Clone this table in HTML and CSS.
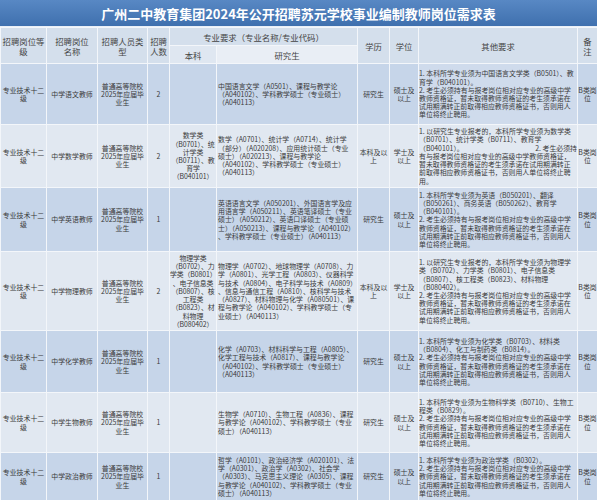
FILE: index.html
```html
<!DOCTYPE html>
<html lang="zh-CN">
<head>
<meta charset="utf-8">
<title>岗位需求表</title>
<link rel="stylesheet" href="styles.css">
</head>
<body>
<div class="title">广州二中教育集团2024年公开招聘苏元学校事业编制教师岗位需求表</div>
<table>
  <colgroup>
    <col class="c1"><col class="c2"><col class="c3"><col class="c4"><col class="c5">
    <col class="c6"><col class="c7"><col class="c8"><col class="c9"><col class="c10">
  </colgroup>
  <thead>
    <tr class="h1">
      <th rowspan="2">招聘岗位等<br>级</th>
      <th rowspan="2">招聘岗位<br>名称</th>
      <th rowspan="2">招聘人员类<br>型</th>
      <th rowspan="2">招聘<br>人数</th>
      <th colspan="2">专业要求（专业名称/专业代码）</th>
      <th rowspan="2">学历</th>
      <th rowspan="2">学位</th>
      <th rowspan="2">其他要求</th>
      <th rowspan="2">备<br>注</th>
    </tr>
    <tr class="h2">
      <th class="s1">本科</th>
      <th class="s2">研究生</th>
    </tr>
  </thead>
  <tbody>
    <tr class="odd">
      <td>专业技术十二<br>级</td>
      <td>中学语文教师</td>
      <td>普通高等院校<br>2025年应届毕<br>业生</td>
      <td>2</td>
      <td class="bk"></td>
      <td class="l">中国语言文学（A0501）、课程与教学论<br>（A040102）、学科教学硕士（专业硕士）<br>（A040113）</td>
      <td>研究生</td>
      <td>硕士及<br>以上</td>
      <td class="l o">1. 本科所学专业须为中国语言文学类（B0501）、教<br>育学（B040101）。<br>2. 考生必须持有与报考岗位相对应专业的高级中学<br>教师资格证，暂未取得教师资格证的考生须承诺在<br>试用期满转正前取得相应教师资格证书，否则用人<br>单位将终止聘用。</td>
      <td>B类岗<br>位</td>
    </tr>
    <tr class="even">
      <td>专业技术十二<br>级</td>
      <td>中学数学教师</td>
      <td>普通高等院校<br>2025年应届毕<br>业生</td>
      <td>2</td>
      <td class="bk">数学类<br>（B0701）、统<br>计学类<br>（B0711）、教<br>育学<br>（B040101）</td>
      <td class="l">数学（A0701）、统计学（A0714）、统计学<br>（部分）（A020208）、应用统计硕士（专业<br>硕士）（A020213）、课程与教学论<br>（A040102）、学科教学硕士（专业硕士）<br>（A040113）</td>
      <td>本科及以<br>上</td>
      <td>学士及<br>以上</td>
      <td class="l o">1. 以研究生专业报考的，本科所学专业须为数学类<br>（B0701）、统计学类（B0711）、教育学<br><span class="split"><span>（B040101）。</span><span>2. 考生必须持</span></span>有与报考岗位相对应专业的高级中学教师资格证，<br>暂未取得教师资格证的考生须承诺在试用期满转正<br>前取得相应教师资格证书，否则用人单位将终止聘<br>用。</td>
      <td>B类岗<br>位</td>
    </tr>
    <tr class="odd">
      <td>专业技术十二<br>级</td>
      <td>中学英语教师</td>
      <td>普通高等院校<br>2025年应届毕<br>业生</td>
      <td>1</td>
      <td class="bk"></td>
      <td class="l">英语语言文学（A050201）、外国语言学及应<br>用语言学（A050211）、英语笔译硕士（专业<br>硕士）（A050212）、英语口译硕士（专业硕<br>士）（A050213）、课程与教学论（A040102）<br>、学科教学硕士（专业硕士）（A040113）</td>
      <td>研究生</td>
      <td>硕士及<br>以上</td>
      <td class="l o">1. 本科所学专业须为英语（B050201）、翻译<br>（B050261）、商务英语（B050262）、教育学<br>（B040101）。<br>2. 考生必须持有与报考岗位相对应专业的高级中学<br>教师资格证，暂未取得教师资格证的考生须承诺在<br>试用期满转正前取得相应教师资格证书，否则用人<br>单位将终止聘用。</td>
      <td>B类岗<br>位</td>
    </tr>
    <tr class="even">
      <td>专业技术十二<br>级</td>
      <td>中学物理教师</td>
      <td>普通高等院校<br>2025年应届毕<br>业生</td>
      <td>2</td>
      <td class="bk">物理学类<br>（B0702）、力<br>学类（B0801）<br>、电子信息类<br>（B0807）、核<br>工程类<br>（B0823）、材<br>料物理<br>（B080402）</td>
      <td class="l">物理学（A0702）、地球物理学（A0708）、力<br>学（A0801）、光学工程（A0803）、仪器科学<br>与技术（A0804）、电子科学与技术（A0809）<br>、信息与通信工程（A0810）、核科学与技术<br>（A0827）、材料物理与化学（A080501）、课<br>程与教学论（A040102）、学科教学硕士（专<br>业硕士）（A040113）</td>
      <td>本科及以<br>上</td>
      <td>学士及<br>以上</td>
      <td class="l o">1. 以研究生专业报考的，本科所学专业须为物理学<br>类（B0702）、力学类（B0801）、电子信息类<br>（B0807）、核工程类（B0823）、材料物理<br>（B080402）。<br>2. 考生必须持有与报考岗位相对应专业的高级中学<br>教师资格证，暂未取得教师资格证的考生须承诺在<br>试用期满转正前取得相应教师资格证书，否则用人<br>单位将终止聘用。</td>
      <td>B类岗<br>位</td>
    </tr>
    <tr class="odd">
      <td>专业技术十二<br>级</td>
      <td>中学化学教师</td>
      <td>普通高等院校<br>2025年应届毕<br>业生</td>
      <td>1</td>
      <td class="bk"></td>
      <td class="l">化学（A0703）、材料科学与工程（A0805）、<br>化学工程与技术（A0817）、课程与教学论<br>（A040102）、学科教学硕士（专业硕士）<br>（A040113）</td>
      <td>研究生</td>
      <td>硕士及<br>以上</td>
      <td class="l o">1. 本科所学专业须为化学类（B0703）、材料类<br>（B0804）、化工与制药类（B0814）。<br>2. 考生必须持有与报考岗位相对应专业的高级中学<br>教师资格证，暂未取得教师资格证的考生须承诺在<br>试用期满转正前取得相应教师资格证书，否则用人<br>单位将终止聘用。</td>
      <td>B类岗<br>位</td>
    </tr>
    <tr class="even">
      <td>专业技术十二<br>级</td>
      <td>中学生物教师</td>
      <td>普通高等院校<br>2025年应届毕<br>业生</td>
      <td>1</td>
      <td class="bk"></td>
      <td class="l">生物学（A0710）、生物工程（A0836）、课程<br>与教学论（A040102）、学科教学硕士（专业<br>硕士）（A040113）</td>
      <td>研究生</td>
      <td>硕士及<br>以上</td>
      <td class="l o">1. 本科所学专业须为生物科学类（B0710）、生物工<br>程类（B0829）。<br>2. 考生必须持有与报考岗位相对应专业的高级中学<br>教师资格证，暂未取得教师资格证的考生须承诺在<br>试用期满转正前取得相应教师资格证书，否则用人<br>单位将终止聘用。</td>
      <td>B类岗<br>位</td>
    </tr>
    <tr class="odd">
      <td>专业技术十二<br>级</td>
      <td>中学政治教师</td>
      <td>普通高等院校<br>2025年应届毕<br>业生</td>
      <td>1</td>
      <td class="bk"></td>
      <td class="l">哲学（A0101）、政治经济学（A020101）、法<br>学（A0301）、政治学（A0302）、社会学<br>（A0303）、马克思主义理论（A0305）、课程<br>与教学论（A040102）、学科教学硕士（专业<br>硕士）（A040113）</td>
      <td>研究生</td>
      <td>硕士及<br>以上</td>
      <td class="l o">1. 本科所学专业须为政治学类（B0302）。<br>2. 考生必须持有与报考岗位相对应专业的高级中学<br>教师资格证，暂未取得教师资格证的考生须承诺在<br>试用期满转正前取得相应教师资格证书，否则用人<br>单位将终止聘用。</td>
      <td>B类岗<br>位</td>
    </tr>
  </tbody>
</table>
</body>
</html>
```
FILE: styles.css
```css
html, body {
  margin: 0;
  padding: 0;
  background: #ffffff;
}
body {
  width: 597px;
  font-family: "Noto Sans CJK SC", "Noto Sans", sans-serif;
  color: #3a3a3a;
  overflow: hidden;
}
.title {
  height: 26px;
  background: linear-gradient(#5888c4, #3f70ae);
  color: #ffffff;
  font-weight: bold;
  font-size: 13px;
  display: flex;
  align-items: center;
  justify-content: center;
  border-bottom: 1px solid #e9eff7;
}
table {
  width: 597px;
  table-layout: fixed;
  border-collapse: collapse;
}
.c1 { width: 46px; }
.c2 { width: 51px; }
.c3 { width: 50px; }
.c4 { width: 22px; }
.c5 { width: 47px; }
.c6 { width: 141px; }
.c7 { width: 32px; }
.c8 { width: 29px; }
.c9 { width: 159px; }
.c10 { width: 20px; }
th, td {
  border: 1px solid #f3f6fa;
  padding: 0;
  text-align: center;
  vertical-align: middle;
  overflow: hidden;
  white-space: nowrap;
}
th {
  font-weight: normal;
  font-size: 8.4px;
  line-height: 10px;
  color: #454545;
  background: #d4dfec;
}
.h1 { height: 18px; }
.h2 { height: 18px; }
.h2 .s1 { background: #dfe7f1; }
.h2 .s2 { background: #e9eef5; }
td {
  font-size: 6.9px;
  line-height: 8.2px;
}
td.bk { letter-spacing: -0.1px; }
tr.odd td { background: #c6d5e9; }
tr.even td { background: #e1e8f1; }
tr.odd td.o { background: #cfdbec; }
td.l {
  text-align: left;
  padding-left: 1px;
}
td.o { padding-left: 0; }
.split {
  display: flex;
  justify-content: space-between;
}
tbody tr:nth-child(1) { height: 61px; }
tbody tr:nth-child(2) { height: 63px; }
tbody tr:nth-child(3) { height: 64px; }
tbody tr:nth-child(4) { height: 79px; }
tbody tr:nth-child(5) { height: 62px; }
tbody tr:nth-child(6) { height: 60px; }
tbody tr:nth-child(7) { height: 48px; }
```
